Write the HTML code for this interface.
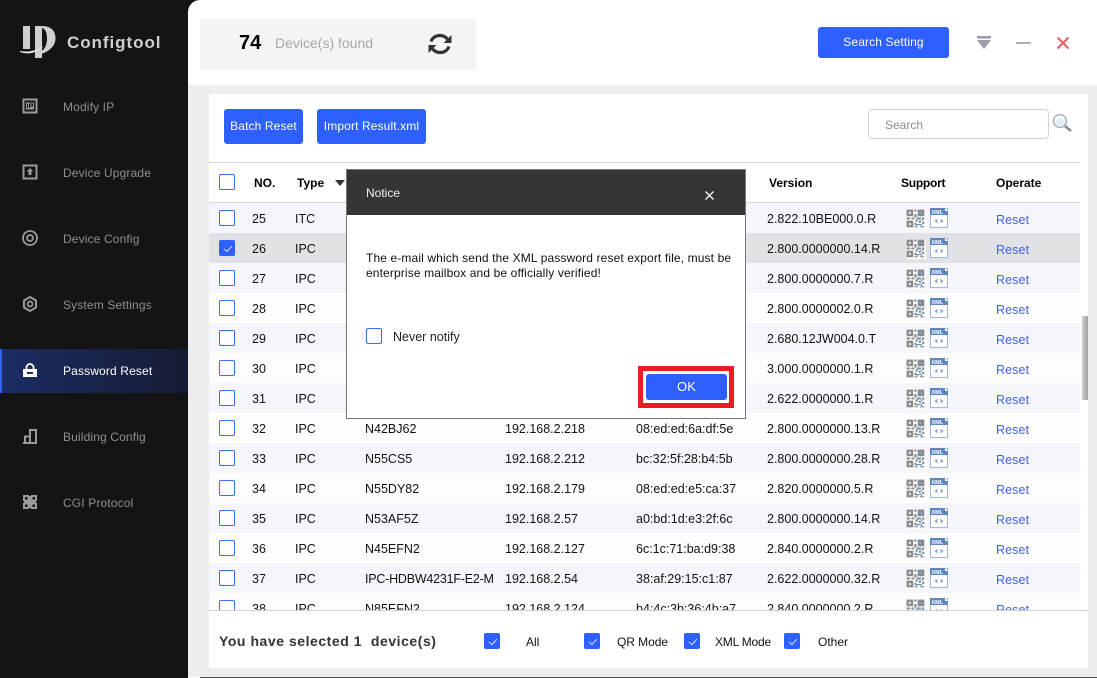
<!DOCTYPE html>
<html><head><meta charset="utf-8">
<style>
html,body{margin:0;padding:0;width:1097px;height:678px;overflow:hidden;background:#141414;font-family:"Liberation Sans",sans-serif;font-size:12.5px;color:#111}
div,span,svg{position:absolute;box-sizing:border-box;white-space:nowrap}
.main{left:188px;top:0;width:909px;height:678px;background:#fff;border-top-left-radius:12px;overflow:hidden}
.nav{left:63px;color:#8f8f8f;font-size:12px;line-height:16px;letter-spacing:.14px}
.ni{left:21px;width:18px;height:18px}
.btn{background:#2e5fff;color:#fff;border-radius:3px;text-align:center;font-size:12px;letter-spacing:.12px}
.cb{left:219px;width:16px;height:16px;border:1px solid #3f6bf0;border-radius:2px;background:#fff}
.on{background:#2e5fff;border-color:#2e5fff;border-radius:2px}
.on svg{left:3px;top:4px}
.row{left:209px;width:871px;height:30px}
.t{line-height:16px}
.th{font-weight:bold;font-size:12px;line-height:16px;top:175px;color:#000}
.rs{color:#3f62f0;left:996px;letter-spacing:.1px}
</style></head><body>
<svg width="0" height="0" style="left:0;top:0">
<defs>
<symbol id="qr" viewBox="1.500 1.500 18 18"><rect x="0" y="0" width="21" height="21" fill="#fff"/><rect x="2" y="2" width="6" height="6" fill="#8a8a8a"/><rect x="12" y="2" width="6" height="6" fill="#8a8a8a"/><rect x="2" y="12" width="6" height="6" fill="#8a8a8a"/><rect x="4" y="4" width="2" height="2" fill="#e2e2e2"/><rect x="14" y="4" width="2" height="2" fill="#6aa8dc"/><rect x="4" y="14" width="2" height="2" fill="#e2e2e2"/><path d="M9 2h2v2H9zM9 6h2v3H9zM2 9h3v2H2zM7 9h2v2H7zM12 9h3v2h-3zM16 9h2v2h-2zM10 11h2v2h-2zM13 12h2v2h-2zM16 13h2v2h-2zM9 14h2v2H9zM12 15h3v1h-3zM9 17h3v1H9zM14 17h4v1h-4z" fill="#8c8c8c"/><path d="M6 9.500h1v1H6zM11 9h1v2h-1zM15 11h2v1h-2zM11 15h1v2h-1zM15 15h1v2h-1z" fill="#4ea5e0"/></symbol>
<symbol id="xml" viewBox="0 0 18 20"><rect x=".5" y=".5" width="17" height="19" fill="#fff" stroke="#9db7d8"/><path d="M0 0h14l4 3v4H0z" fill="#5c86c0"/><path d="M15 0l3 3h-3z" fill="#fff"/><text x="1.500" y="5.800" font-family="Liberation Sans" font-size="5.500" font-weight="bold" fill="#fff">XML</text><path d="M7.500 11.500l-2 1.500 2 1.500M10.500 11.500l2 1.500-2 1.500" fill="none" stroke="#5c7fb0" stroke-width="1"/></symbol>
</defs></svg>

<!-- sidebar -->
<svg style="left:20px;top:24px" width="38" height="36" viewBox="0 0 38 36"><path d="M3 2h7v23H3zM15 2h7v32h-7z" fill="#cfcfcf"/><path d="M22 2c9 0 13.500 5 13.500 12 0 8-6 13-14 16l-1-2c5-3 6.500-8 6.500-14 0-5-1.500-9-5-10z" fill="#cfcfcf"/><path d="M0 27c8 1.500 16 0 24-5-6 6-15 9.500-24 6z" fill="#e8e8e8"/></svg>
<div class="t" style="left:67px;top:33px;font-size:17px;line-height:20px;font-weight:bold;color:#cfcfcf;letter-spacing:.95px">Configtool</div>

<svg class="ni" style="top:97px" viewBox="0 0 18 18"><rect x="2.500" y="2.500" width="13" height="13" fill="none" stroke="#9a9a9a" stroke-width="2"/><rect x="5" y="5.500" width="8" height="7" fill="#9a9a9a"/><path d="M6.500 7v4M8.500 7v4M8.500 7h3v2h-3" stroke="#141414" fill="none"/></svg>
<div class="nav" style="top:99px">Modify IP</div>
<svg class="ni" style="top:163px" viewBox="0 0 18 18"><rect x="2.500" y="2.500" width="13" height="13" fill="none" stroke="#9a9a9a" stroke-width="2"/><path d="M9 5l3.500 3.500H10.500V12h-3V8.500H5.500z" fill="#9a9a9a"/></svg>
<div class="nav" style="top:165px">Device Upgrade</div>
<svg class="ni" style="top:229px" viewBox="0 0 18 18"><circle cx="9" cy="9" r="7" fill="none" stroke="#9a9a9a" stroke-width="1.800"/><circle cx="9" cy="9" r="3" fill="none" stroke="#9a9a9a" stroke-width="1.800"/></svg>
<div class="nav" style="top:231px">Device Config</div>
<svg class="ni" style="top:295px" viewBox="0 0 18 18"><path d="M9 2l6 3.500v7L9 16l-6-3.500v-7z" fill="none" stroke="#9a9a9a" stroke-width="2"/><circle cx="9" cy="9" r="2.500" fill="none" stroke="#9a9a9a" stroke-width="1.800"/></svg>
<div class="nav" style="top:297px">System Settings</div>
<div style="left:0;top:349px;width:190px;height:44px;background:linear-gradient(90deg,#1b2c63,#161c33);border-left:2px solid #2e5fff"></div>
<svg class="ni" style="top:361px" viewBox="0 0 18 18"><path d="M5.500 8V6.500a3.500 3.500 0 0 1 7 0V8" fill="none" stroke="#fff" stroke-width="1.800"/><rect x="2" y="8" width="14" height="8" fill="#fff"/><rect x="6" y="11" width="6" height="2" fill="#1b2c63"/></svg>
<div class="nav" style="top:363px;color:#fff">Password Reset</div>
<svg class="ni" style="top:427px" viewBox="0 0 18 18"><path d="M2 16h14" stroke="#9a9a9a" stroke-width="2"/><path d="M4 16V9.500h5M9 16V3h6v13" fill="none" stroke="#9a9a9a" stroke-width="2"/></svg>
<div class="nav" style="top:429px">Building Config</div>
<svg class="ni" style="top:493px" viewBox="0 0 18 18"><path d="M2 2h14v14H2z" fill="#9a9a9a"/><path d="M4 4h2.500v2.500H4zM11.500 4H14v2.500h-2.500zM4 11.500h2.500V14H4zM11.500 11.500H14V14h-2.500zM8 2h2v1H8zM8 15h2v1H8zM2 8h1v2H2zM15 8h1v2h-1z" fill="#141414"/></svg>
<div class="nav" style="top:495px">CGI Protocol</div>

<div class="main"></div>

<!-- top bar -->
<div style="left:200px;top:19px;width:276px;height:51px;background:#f4f4f4"></div>
<div class="t" style="left:239px;top:31px;font-size:20px;line-height:24px;font-weight:bold;color:#000">74</div>
<div class="t" style="left:275px;top:35px;font-size:14px;color:#a8a8a8">Device(s) found</div>
<svg style="left:428px;top:32px" width="24" height="24" viewBox="0 0 24 24"><path d="M3 9.500C4.500 5.500 8 3.500 12 3.500c3 0 5.500 1.300 7.500 3.500" fill="none" stroke="#333" stroke-width="3.200"/><path d="M23.500 3v8h-8z" fill="#333"/><path d="M21 14.500c-1.500 4-5 6-9 6-3 0-5.500-1.300-7.500-3.500" fill="none" stroke="#333" stroke-width="3.200"/><path d="M.5 21v-8h8z" fill="#333"/></svg>
<div class="btn" style="left:818px;top:27px;width:131px;height:31px;line-height:31px">Search Setting</div>
<svg style="left:976px;top:35px" width="16" height="15" viewBox="0 0 16 15"><rect x="1" y="1" width="14" height="2.500" fill="#9a9da6"/><path d="M1 5h14l-7 9z" fill="#9a9da6"/></svg>
<div style="left:1016px;top:42px;width:15px;height:2px;background:#b0b2b8"></div>
<svg style="left:1056px;top:36px" width="14" height="14" viewBox="0 0 14 14"><path d="M1.500 1.500l11 11M12.500 1.500l-11 11" stroke="#ee5a62" stroke-width="2"/></svg>

<!-- content -->
<div style="left:188px;top:85px;width:909px;height:592px;background:#eeeeee"></div>
<div style="left:200px;top:677px;width:897px;height:1px;background:#555"></div>
<div style="left:209px;top:94px;width:879px;height:574px;background:#fff"></div>
<div class="btn" style="left:224px;top:109px;width:79px;height:35px;line-height:35px">Batch Reset</div>
<div class="btn" style="left:317px;top:109px;width:109px;height:35px;line-height:35px">Import Result.xml</div>
<div style="left:868px;top:109px;width:181px;height:30px;border:1px solid #d2d2d6;border-radius:4px;background:#fff"></div>
<div class="t" style="left:885px;top:117px;font-size:12px;color:#8a8a92">Search</div>
<svg style="left:1051px;top:112px" width="22" height="22" viewBox="0 0 22 22"><circle cx="9" cy="9" r="6.500" fill="#e6eef5" stroke="#aeb8bf" stroke-width="1.600"/><path d="M4.500 7c1.500-2 6-2.500 8.500 0" stroke="#fff" stroke-width="2" fill="none"/><path d="M14 14l6 5" stroke="#8c8c8c" stroke-width="2.600"/></svg>

<div style="left:209px;top:162px;width:871px;height:1px;background:#d5d5d5"></div>
<div style="left:209px;top:202px;width:871px;height:1px;background:#d5d5d5"></div>
<div class="cb" style="top:174px"></div>
<div class="th" style="left:254px">NO.</div>
<div class="th" style="left:297px">Type</div>
<svg style="left:335px;top:180px" width="10" height="6" viewBox="0 0 10 6"><path d="M0 0h10L5 6z" fill="#333"/></svg>
<div class="th" style="left:769px">Version</div>
<div class="th" style="left:901px;letter-spacing:-.25px">Support</div>
<div class="th" style="left:996px">Operate</div>

<!-- rows -->
<div class="row" style="top:203px;background:#f5f6fb"></div>
<div class="row" style="top:233px;background:#e1e2e6"></div>
<div class="row" style="top:263px;background:#f5f6fb"></div>
<div class="row" style="top:293px;background:#fdfdfd"></div>
<div class="row" style="top:323px;background:#f5f6fb"></div>
<div class="row" style="top:353px;background:#fdfdfd"></div>
<div class="row" style="top:383px;background:#f5f6fb"></div>
<div class="row" style="top:413px;background:#fdfdfd"></div>
<div class="row" style="top:443px;background:#f5f6fb"></div>
<div class="row" style="top:473px;background:#fdfdfd"></div>
<div class="row" style="top:503px;background:#f5f6fb"></div>
<div class="row" style="top:533px;background:#fdfdfd"></div>
<div class="row" style="top:563px;background:#f5f6fb"></div>
<div class="row" style="top:593px;height:17px;background:#fdfdfd"></div>

<div class="cb" style="top:210px"></div><div class="t" style="left:252px;top:211px">25</div><div class="t" style="left:295px;top:211px">ITC</div><div class="t" style="left:767px;top:211px">2.822.10BE000.0.R</div><svg style="left:906px;top:209px" width="20" height="20"><use href="#qr"/></svg><svg style="left:930px;top:208px" width="18" height="20"><use href="#xml"/></svg><div class="t rs" style="top:212px">Reset</div>

<div class="cb on" style="top:240px"><svg width="10" height="8" viewBox="0 0 10 8"><path d="M1 4l3 2.500L9 1" fill="none" stroke="#cfd9ff" stroke-width="1"/></svg></div><div class="t" style="left:252px;top:241px">26</div><div class="t" style="left:295px;top:241px">IPC</div><div class="t" style="left:767px;top:241px">2.800.0000000.14.R</div><svg style="left:906px;top:239px" width="20" height="20"><use href="#qr"/></svg><svg style="left:930px;top:238px" width="18" height="20"><use href="#xml"/></svg><div class="t rs" style="top:242px">Reset</div>

<div class="cb" style="top:270px"></div><div class="t" style="left:252px;top:271px">27</div><div class="t" style="left:295px;top:271px">IPC</div><div class="t" style="left:767px;top:271px">2.800.0000000.7.R</div><svg style="left:906px;top:269px" width="20" height="20"><use href="#qr"/></svg><svg style="left:930px;top:268px" width="18" height="20"><use href="#xml"/></svg><div class="t rs" style="top:272px">Reset</div>

<div class="cb" style="top:300px"></div><div class="t" style="left:252px;top:301px">28</div><div class="t" style="left:295px;top:301px">IPC</div><div class="t" style="left:767px;top:301px">2.800.0000002.0.R</div><svg style="left:906px;top:299px" width="20" height="20"><use href="#qr"/></svg><svg style="left:930px;top:298px" width="18" height="20"><use href="#xml"/></svg><div class="t rs" style="top:302px">Reset</div>

<div class="cb" style="top:330px"></div><div class="t" style="left:252px;top:331px">29</div><div class="t" style="left:295px;top:331px">IPC</div><div class="t" style="left:767px;top:331px">2.680.12JW004.0.T</div><svg style="left:906px;top:329px" width="20" height="20"><use href="#qr"/></svg><svg style="left:930px;top:328px" width="18" height="20"><use href="#xml"/></svg><div class="t rs" style="top:332px">Reset</div>

<div class="cb" style="top:360px"></div><div class="t" style="left:252px;top:361px">30</div><div class="t" style="left:295px;top:361px">IPC</div><div class="t" style="left:767px;top:361px">3.000.0000000.1.R</div><svg style="left:906px;top:359px" width="20" height="20"><use href="#qr"/></svg><svg style="left:930px;top:358px" width="18" height="20"><use href="#xml"/></svg><div class="t rs" style="top:362px">Reset</div>

<div class="cb" style="top:390px"></div><div class="t" style="left:252px;top:391px">31</div><div class="t" style="left:295px;top:391px">IPC</div><div class="t" style="left:767px;top:391px">2.622.0000000.1.R</div><svg style="left:906px;top:389px" width="20" height="20"><use href="#qr"/></svg><svg style="left:930px;top:388px" width="18" height="20"><use href="#xml"/></svg><div class="t rs" style="top:392px">Reset</div>

<div class="cb" style="top:420px"></div><div class="t" style="left:252px;top:421px">32</div><div class="t" style="left:295px;top:421px">IPC</div><div class="t" style="left:365px;top:421px">N42BJ62</div><div class="t" style="left:505px;top:421px">192.168.2.218</div><div class="t" style="left:636px;top:421px">08:ed:ed:6a:df:5e</div><div class="t" style="left:767px;top:421px">2.800.0000000.13.R</div><svg style="left:906px;top:419px" width="20" height="20"><use href="#qr"/></svg><svg style="left:930px;top:418px" width="18" height="20"><use href="#xml"/></svg><div class="t rs" style="top:422px">Reset</div>

<div class="cb" style="top:450px"></div><div class="t" style="left:252px;top:451px">33</div><div class="t" style="left:295px;top:451px">IPC</div><div class="t" style="left:365px;top:451px">N55CS5</div><div class="t" style="left:505px;top:451px">192.168.2.212</div><div class="t" style="left:636px;top:451px">bc:32:5f:28:b4:5b</div><div class="t" style="left:767px;top:451px">2.800.0000000.28.R</div><svg style="left:906px;top:449px" width="20" height="20"><use href="#qr"/></svg><svg style="left:930px;top:448px" width="18" height="20"><use href="#xml"/></svg><div class="t rs" style="top:452px">Reset</div>

<div class="cb" style="top:480px"></div><div class="t" style="left:252px;top:481px">34</div><div class="t" style="left:295px;top:481px">IPC</div><div class="t" style="left:365px;top:481px">N55DY82</div><div class="t" style="left:505px;top:481px">192.168.2.179</div><div class="t" style="left:636px;top:481px">08:ed:ed:e5:ca:37</div><div class="t" style="left:767px;top:481px">2.820.0000000.5.R</div><svg style="left:906px;top:479px" width="20" height="20"><use href="#qr"/></svg><svg style="left:930px;top:478px" width="18" height="20"><use href="#xml"/></svg><div class="t rs" style="top:482px">Reset</div>

<div class="cb" style="top:510px"></div><div class="t" style="left:252px;top:511px">35</div><div class="t" style="left:295px;top:511px">IPC</div><div class="t" style="left:365px;top:511px">N53AF5Z</div><div class="t" style="left:505px;top:511px">192.168.2.57</div><div class="t" style="left:636px;top:511px">a0:bd:1d:e3:2f:6c</div><div class="t" style="left:767px;top:511px">2.800.0000000.14.R</div><svg style="left:906px;top:509px" width="20" height="20"><use href="#qr"/></svg><svg style="left:930px;top:508px" width="18" height="20"><use href="#xml"/></svg><div class="t rs" style="top:512px">Reset</div>

<div class="cb" style="top:540px"></div><div class="t" style="left:252px;top:541px">36</div><div class="t" style="left:295px;top:541px">IPC</div><div class="t" style="left:365px;top:541px">N45EFN2</div><div class="t" style="left:505px;top:541px">192.168.2.127</div><div class="t" style="left:636px;top:541px">6c:1c:71:ba:d9:38</div><div class="t" style="left:767px;top:541px">2.840.0000000.2.R</div><svg style="left:906px;top:539px" width="20" height="20"><use href="#qr"/></svg><svg style="left:930px;top:538px" width="18" height="20"><use href="#xml"/></svg><div class="t rs" style="top:542px">Reset</div>

<div class="cb" style="top:570px"></div><div class="t" style="left:252px;top:571px">37</div><div class="t" style="left:295px;top:571px">IPC</div><div class="t" style="left:365px;top:571px;letter-spacing:-.22px">IPC-HDBW4231F-E2-M</div><div class="t" style="left:505px;top:571px">192.168.2.54</div><div class="t" style="left:636px;top:571px">38:af:29:15:c1:87</div><div class="t" style="left:767px;top:571px">2.622.0000000.32.R</div><svg style="left:906px;top:569px" width="20" height="20"><use href="#qr"/></svg><svg style="left:930px;top:568px" width="18" height="20"><use href="#xml"/></svg><div class="t rs" style="top:572px">Reset</div>

<div class="cb" style="top:600px"></div><div class="t" style="left:252px;top:601px">38</div><div class="t" style="left:295px;top:601px">IPC</div><div class="t" style="left:365px;top:601px">N85EFN2</div><div class="t" style="left:505px;top:601px">192.168.2.124</div><div class="t" style="left:636px;top:601px">b4:4c:3b:36:4b:a7</div><div class="t" style="left:767px;top:601px">2.840.0000000.2.R</div><svg style="left:906px;top:599px" width="20" height="20"><use href="#qr"/></svg><svg style="left:930px;top:598px" width="18" height="20"><use href="#xml"/></svg><div class="t rs" style="top:602px">Reset</div>

<!-- footer -->
<div style="left:209px;top:610px;width:879px;height:58px;background:#fff;border-top:1px solid #d0d0d0"></div>
<div class="t" style="left:219px;top:633px;font-size:14px;font-weight:bold;color:#333;letter-spacing:.54px;white-space:pre">You have selected 1  device(s)</div>
<div class="cb on" style="left:484px;top:633px"><svg width="10" height="8" viewBox="0 0 10 8"><path d="M1 4l3 2.500L9 1" fill="none" stroke="#cfd9ff" stroke-width="1"/></svg></div>
<div class="t" style="left:526px;top:634px;font-size:12px">All</div>
<div class="cb on" style="left:584px;top:633px"><svg width="10" height="8" viewBox="0 0 10 8"><path d="M1 4l3 2.500L9 1" fill="none" stroke="#cfd9ff" stroke-width="1"/></svg></div>
<div class="t" style="left:617px;top:634px;font-size:12px;letter-spacing:-.05px">QR Mode</div>
<div class="cb on" style="left:684px;top:633px"><svg width="10" height="8" viewBox="0 0 10 8"><path d="M1 4l3 2.500L9 1" fill="none" stroke="#cfd9ff" stroke-width="1"/></svg></div>
<div class="t" style="left:715px;top:634px;font-size:12px;letter-spacing:-.2px">XML Mode</div>
<div class="cb on" style="left:784px;top:633px"><svg width="10" height="8" viewBox="0 0 10 8"><path d="M1 4l3 2.500L9 1" fill="none" stroke="#cfd9ff" stroke-width="1"/></svg></div>
<div class="t" style="left:818px;top:634px;font-size:12px">Other</div>

<!-- scrollbar -->
<div style="left:1082px;top:316px;width:6px;height:84px;background:linear-gradient(90deg,#d0d0d0,#a0a0a0);border-radius:1px"></div>

<!-- dialog -->
<div style="left:346px;top:169px;width:400px;height:250px;background:#fff;border:1px solid #777"></div>
<div style="left:347px;top:170px;width:398px;height:45px;background:#353535"></div>
<div class="t" style="left:366px;top:185px;font-size:12px;color:#f0f0f0">Notice</div>
<svg style="left:705px;top:191px" width="9" height="9" viewBox="0 0 9 9"><path d="M.5.500l8 8M8.500.500l-8 8" stroke="#fff" stroke-width="1.300"/></svg>
<div class="t" style="left:366px;top:251px;font-size:12px;line-height:15px;width:372px;white-space:normal;color:#111;letter-spacing:.125px">The e-mail which send the XML password reset export file, must be enterprise mailbox and be officially verified!</div>
<div class="cb" style="left:366px;top:328px"></div>
<div class="t" style="left:393px;top:329px;font-size:12.500px;color:#222">Never notify</div>
<div style="left:638px;top:366px;width:96px;height:42px;background:#ed1c24"></div>
<div style="left:643px;top:371px;width:86px;height:32px;background:#fff"></div>
<div class="btn" style="left:646px;top:374px;width:81px;height:26px;line-height:26px;font-size:13px">OK</div>
</body></html>
